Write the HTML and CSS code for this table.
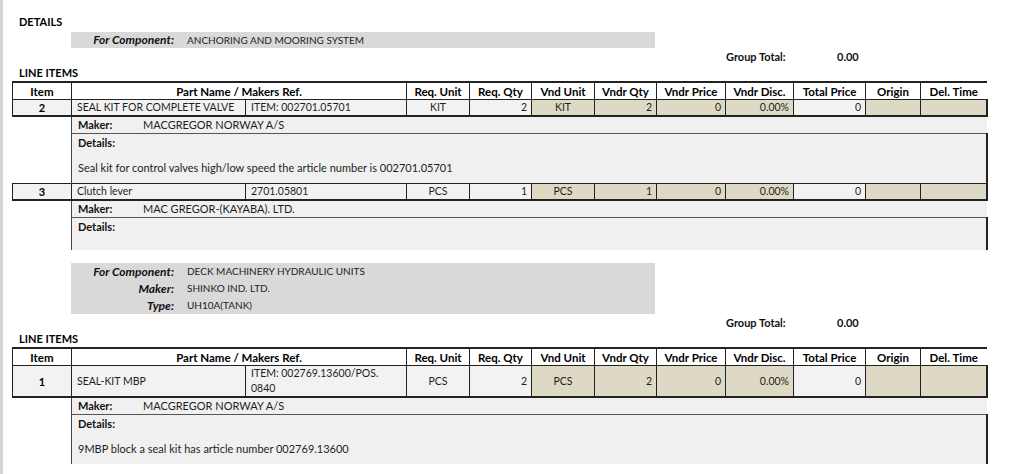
FILE: index.html
```html
<!DOCTYPE html>
<html>
<head>
<meta charset="utf-8">
<link rel="stylesheet" href="styles.css">
</head>
<body>
<div class="page">
  <div class="section-title">DETAILS</div>
  <div class="component single">
    <span class="clabel">For Component:</span><span class="cvalue">ANCHORING AND MOORING SYSTEM</span>
  </div>
  <div class="group-total"><span class="gt-label">Group Total:</span><span class="gt-value">0.00</span></div>
  <div class="section-title">LINE ITEMS</div>
  <table class="items">
    <colgroup>
      <col class="w-item"><col class="w-p1"><col class="w-p2"><col class="w-ru"><col class="w-rq"><col class="w-vu"><col class="w-vq"><col class="w-vp"><col class="w-vd"><col class="w-tp"><col class="w-or"><col class="w-dt">
    </colgroup>
    <thead>
      <tr><th>Item</th><th colspan="2">Part Name / Makers Ref.</th><th>Req. Unit</th><th>Req. Qty</th><th>Vnd Unit</th><th>Vndr Qty</th><th>Vndr Price</th><th>Vndr Disc.</th><th>Total Price</th><th>Origin</th><th class="last">Del. Time</th></tr>
    </thead>
    <tbody>
      <tr class="line">
        <td class="num">2</td><td>SEAL KIT FOR COMPLETE VALVE</td><td>ITEM: 002701.05701</td><td class="c">KIT</td><td class="r">2</td><td class="c vnd">KIT</td><td class="r vnd">2</td><td class="r vnd">0</td><td class="r vnd">0.00%</td><td class="r">0</td><td class="vnd"></td><td class="vnd last"></td>
      </tr>
      <tr class="maker"><td class="blank"></td><td colspan="11"><span class="mlabel">Maker:</span>MACGREGOR NORWAY A/S</td></tr>
      <tr class="details"><td class="blank"></td><td colspan="11"><div class="dlabel">Details:</div><div class="dtext">Seal kit for control valves high/low speed the article number is 002701.05701</div></td></tr>
      <tr class="line">
        <td class="num">3</td><td>Clutch lever</td><td>2701.05801</td><td class="c">PCS</td><td class="r">1</td><td class="c vnd">PCS</td><td class="r vnd">1</td><td class="r vnd">0</td><td class="r vnd">0.00%</td><td class="r">0</td><td class="vnd"></td><td class="vnd last"></td>
      </tr>
      <tr class="maker"><td class="blank"></td><td colspan="11"><span class="mlabel">Maker:</span>MAC GREGOR-(KAYABA). LTD.</td></tr>
      <tr class="details empty"><td class="blank"></td><td colspan="11"><div class="dlabel">Details:</div></td></tr>
    </tbody>
  </table>

  <div class="component multi">
    <span class="clabel">For Component:</span><span class="cvalue">DECK MACHINERY HYDRAULIC UNITS</span>
    <span class="clabel">Maker:</span><span class="cvalue">SHINKO IND. LTD.</span>
    <span class="clabel">Type:</span><span class="cvalue">UH10A(TANK)</span>
  </div>
  <div class="group-total"><span class="gt-label">Group Total:</span><span class="gt-value">0.00</span></div>
  <div class="section-title">LINE ITEMS</div>
  <table class="items">
    <colgroup>
      <col class="w-item"><col class="w-p1"><col class="w-p2"><col class="w-ru"><col class="w-rq"><col class="w-vu"><col class="w-vq"><col class="w-vp"><col class="w-vd"><col class="w-tp"><col class="w-or"><col class="w-dt">
    </colgroup>
    <thead>
      <tr><th>Item</th><th colspan="2">Part Name / Makers Ref.</th><th>Req. Unit</th><th>Req. Qty</th><th>Vnd Unit</th><th>Vndr Qty</th><th>Vndr Price</th><th>Vndr Disc.</th><th>Total Price</th><th>Origin</th><th class="last">Del. Time</th></tr>
    </thead>
    <tbody>
      <tr class="line tall">
        <td class="num">1</td><td>SEAL-KIT MBP</td><td class="wrap">ITEM: 002769.13600/POS. 0840</td><td class="c">PCS</td><td class="r">2</td><td class="c vnd">PCS</td><td class="r vnd">2</td><td class="r vnd">0</td><td class="r vnd">0.00%</td><td class="r">0</td><td class="vnd"></td><td class="vnd last"></td>
      </tr>
      <tr class="maker"><td class="blank"></td><td colspan="11"><span class="mlabel">Maker:</span>MACGREGOR NORWAY A/S</td></tr>
      <tr class="details"><td class="blank"></td><td colspan="11"><div class="dlabel">Details:</div><div class="dtext">9MBP block a seal kit has article number 002769.13600</div></td></tr>
    </tbody>
  </table>
</div>
</body>
</html>
```

FILE: styles.css
```css
html, body {
  margin: 0;
  padding: 0;
  background: #ffffff;
}

body {
  font-family: "Lato", "Liberation Sans", sans-serif;
  color: #1e1e1e;
  font-size: 11px;
}

.page {
  border-left: 3px solid #cfd4db;
  min-height: 474px;
  box-sizing: border-box;
  padding: 14px 0 0 9px;
}

.section-title {
  font-weight: 700;
  font-size: 11px;
  line-height: 16px;
  padding-left: 7px;
  color: #000;
}

.component {
  background: #d9d9d9;
  width: 584px;
  margin-left: 59px;
  display: grid;
  grid-template-columns: 103px auto;
  column-gap: 13px;
  font-size: 10px;
  color: #222;
}

.component.single {
  margin-top: 2px;
  line-height: 16px;
}

.component.multi {
  margin-top: 13px;
  line-height: 17px;
}

.clabel {
  text-align: right;
  font-weight: 700;
  font-style: italic;
  font-size: 12px;
  color: #111;
}

.group-total {
  display: flex;
  padding-left: 714px;
  margin-top: 1px;
  line-height: 16px;
  font-weight: 700;
  font-size: 11px;
  color: #111;
}

.gt-label {
  width: 111px;
}

.items {
  border-collapse: collapse;
  table-layout: fixed;
  width: 974px;
}

.w-item { width: 59px; }
.w-p1 { width: 174px; }
.w-p2 { width: 161px; }
.w-ru { width: 63px; }
.w-rq { width: 62px; }
.w-vu { width: 63px; }
.w-vq { width: 62px; }
.w-vp { width: 69px; }
.w-vd { width: 68px; }
.w-tp { width: 72px; }
.w-or { width: 55px; }
.w-dt { width: 66px; }

.items th {
  border: 1px solid #222;
  border-top: 2px solid #222;
  font-weight: 700;
  font-size: 11.5px;
  line-height: 15px;
  padding: 1px 0 0 0;
  color: #000;
  background: #fff;
  text-align: center;
  white-space: nowrap;
}

.items th.last {
  border-right: 0;
}

.items .line td {
  border: 1px solid #222;
  border-bottom: 2px solid #222;
  background: #f2f2f2;
  font-size: 10.5px;
  line-height: 15px;
  padding: 0 5px;
  white-space: nowrap;
  overflow: hidden;
}

.items .line td.last {
  border-right: 2px solid #222;
}

.items .line td.num {
  text-align: center;
  font-weight: 700;
  font-size: 11px;
  color: #000;
}

.items .line td.c { text-align: center; }
.items .line td.r { text-align: right; padding-right: 4px; }

.items .line td.vnd {
  background: #ddd9c4;
}

.items .line.tall td {
  height: 27px;
}

.items .line td.wrap {
  white-space: normal;
  line-height: 15px;
  padding-top: 0;
  padding-bottom: 0;
}

.items td.blank {
  border: 0;
  background: transparent;
}

.items .maker td:not(.blank) {
  background: #f0f0f0;
  border-left: 1px solid #444;
  line-height: 16px;
  padding: 0 6px;
}

.mlabel {
  display: inline-block;
  width: 65px;
  font-weight: 700;
  color: #111;
}

.items .details td:not(.blank) {
  background: #f0f0f0;
  border-left: 1px solid #444;
  border-top: 1px solid #555;
  border-right: 2px solid #222;
  padding: 1px 6px 7px 6px;
  line-height: 16px;
}

.items .details.empty td:not(.blank) {
  padding-bottom: 15px;
}

.dlabel {
  font-weight: 700;
  color: #111;
}

.dtext {
  margin-top: 9px;
}
```
